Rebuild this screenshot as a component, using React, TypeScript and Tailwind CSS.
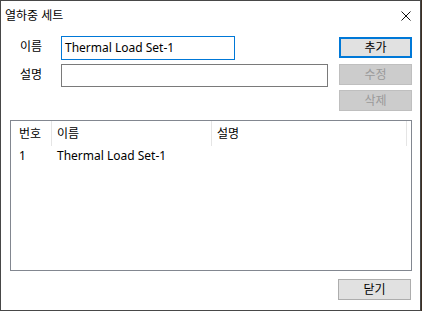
const KR = "font-['Segoe_UI','Noto_Sans','Noto_Sans_CJK_KR',sans-serif]"

const rows = [{ no: '1', name: 'Thermal Load Set-1', desc: '' }]

function CloseIcon() {
  return (
    <svg width="10" height="10" viewBox="0 0 10 10" className="block">
      <path d="M0.5 0.5 L9.5 9.5 M9.5 0.5 L0.5 9.5" stroke="#111" strokeWidth="1" fill="none" />
    </svg>
  )
}

function Btn({ label, kind }: { label: string; kind: 'default' | 'disabled' | 'normal' }) {
  const cls =
    kind === 'default'
      ? 'border-2 border-[#0078d7] bg-[#e1e1e1] text-black'
      : kind === 'disabled'
        ? 'border border-[#bfbfbf] bg-[#cccccc] text-[#9a9a9a]'
        : 'border border-[#adadad] bg-[#e1e1e1] text-black'
  return (
    <div className={`w-[73px] h-[21px] flex items-center justify-center text-[12px] leading-none ${cls}`}>
      {label}
    </div>
  )
}

export default function App() {
  return (
    <div className={`w-[422px] h-[311px] bg-[#3b2f24] ${KR}`}>
      <div className="w-[421px] h-[311px] border border-[#474747] bg-white flex flex-col">
        {/* title bar */}
        <div className="h-[29px] flex items-center justify-between pl-[4px] pr-[9px] shrink-0">
          <span className="text-[12px] leading-none text-black">열하중 세트</span>
          <CloseIcon />
        </div>

        {/* form + buttons */}
        <div className="flex pl-[9px] pr-[8px] mt-[6px]">
          <div className="w-[320px] flex flex-col gap-[4px]">
            <div className="flex items-center">
              <span className="w-[51px] pl-[10px] text-[12px] leading-none text-black -mt-[2px]">이름</span>
              <div className="w-[174px] h-[24px] border border-[#0078d7] flex items-center pl-[3px] text-[12px] text-black leading-none">
                Thermal Load Set-1
              </div>
            </div>
            <div className="flex items-center">
              <span className="w-[51px] pl-[10px] text-[12px] leading-none text-black -mt-[2px]">설명</span>
              <div className="w-[267px] h-[23px] border border-[#7a7a7a]" />
            </div>
          </div>
          <div className="ml-auto flex flex-col pt-[1px]">
            <Btn label="추가" kind="default" />
            <div className="h-[6px]" />
            <Btn label="수정" kind="disabled" />
            <div className="h-[5px]" />
            <Btn label="삭제" kind="disabled" />
          </div>
        </div>

        {/* list */}
        <div className="ml-[9px] mt-[9px] w-[402px] h-[151px] border border-[#828790] text-[12px] leading-none text-black">
          <div className="flex h-[25px]">
            <div className="w-[41px] flex items-center pl-[8px] border-r border-[#e5e5e5]">번호</div>
            <div className="w-[160px] flex items-center pl-[5px] border-r border-[#e5e5e5]">이름</div>
            <div className="w-[195px] flex items-center pl-[5px] border-r border-[#e5e5e5]">설명</div>
          </div>
          {rows.map((r) => (
            <div key={r.no} className="flex h-[18px] mt-[1px]">
              <div className="w-[41px] flex items-center pl-[8px]">{r.no}</div>
              <div className="w-[160px] flex items-center pl-[5px]">{r.name}</div>
              <div className="w-[195px] flex items-center pl-[5px]">{r.desc}</div>
            </div>
          ))}
        </div>

        {/* footer */}
        <div className="flex justify-end pr-[9px] mt-[8px]">
          <Btn label="닫기" kind="normal" />
        </div>
      </div>
    </div>
  )
}
